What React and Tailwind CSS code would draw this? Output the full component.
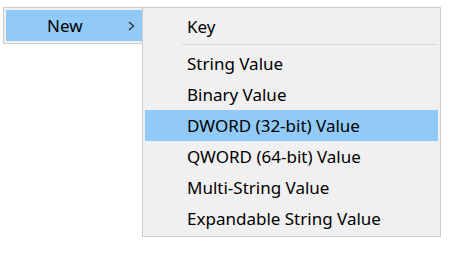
import React from 'react';

const items = [
  'String Value',
  'Binary Value',
  'DWORD (32-bit) Value',
  'QWORD (64-bit) Value',
  'Multi-String Value',
  'Expandable String Value',
];

function Item({ label, active }) {
  return (
    <div
      className={`h-[31px] leading-[31px] pl-[42px] whitespace-nowrap ${
        active ? 'bg-[#91c9f7]' : ''
      }`}
    >
      {label}
    </div>
  );
}

export default function App() {
  return (
    <div
      className="w-[449px] h-[254px] bg-white text-[17px] text-black flex items-start pt-[7px] pl-[3px]"
      style={{ fontFamily: '"Noto Sans", "Open Sans", sans-serif' }}
    >
      {/* parent menu */}
      <div className="w-[139px] bg-[#f0f0f0] border-l border-t border-b border-[#cccccc] pl-[2px] py-[2px]">
        <div className="h-[31px] bg-[#91c9f7] flex items-center">
          <span className="ml-[41px] leading-[31px]">New</span>
          <svg className="ml-auto mr-[7px]" width="7" height="10" viewBox="0 0 7 10">
            <path d="M1 1 L5.5 5 L1 9" fill="none" stroke="#333" strokeWidth="1.4" />
          </svg>
        </div>
      </div>

      {/* submenu */}
      <div className="w-[299px] bg-[#f0f0f0] border border-[#cccccc] px-[2px] pt-[3px] pb-[2px]">
        <Item label="Key" />
        <div className="pt-[2px] pb-[3px] pl-[37px]">
          <div className="h-px bg-[#d7d7d7]" />
        </div>
        {items.map((label) => (
          <Item key={label} label={label} active={label.startsWith('DWORD')} />
        ))}
      </div>
    </div>
  );
}
